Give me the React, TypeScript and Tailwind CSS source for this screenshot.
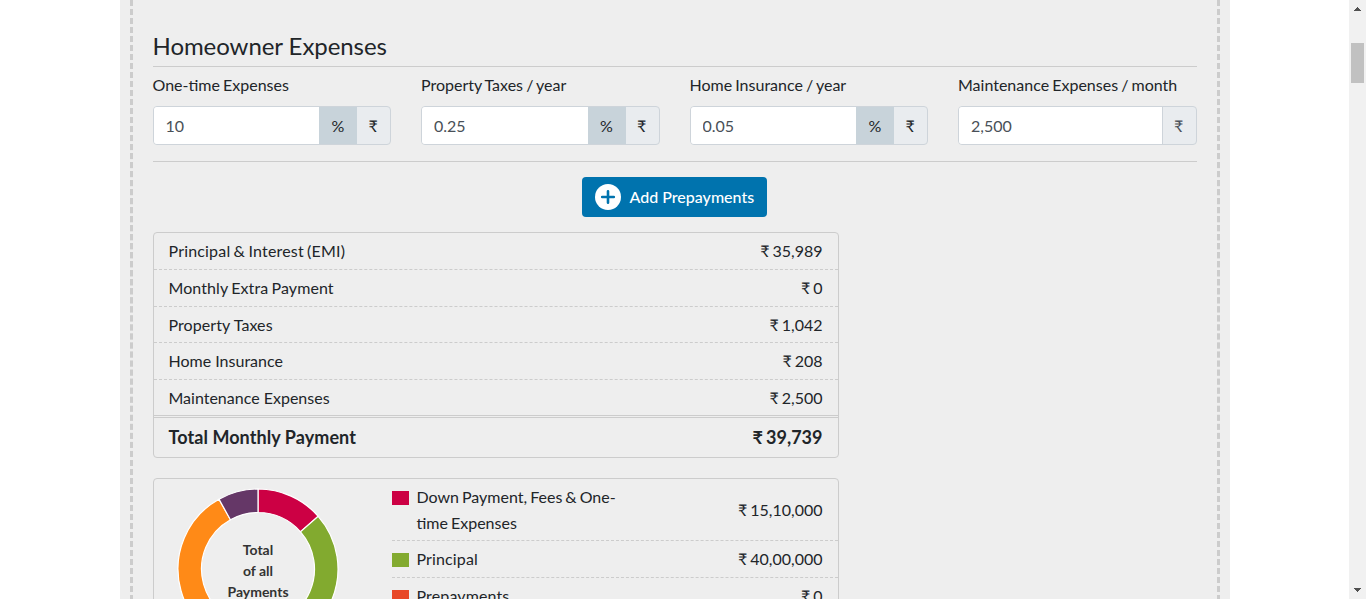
import React from "react";

type Field = { label: string; value: string; percent: boolean };

const fields: Field[] = [
  { label: "One-time Expenses", value: "10", percent: true },
  { label: "Property Taxes / year", value: "0.25", percent: true },
  { label: "Home Insurance / year", value: "0.05", percent: true },
  { label: "Maintenance Expenses / month", value: "2,500", percent: false },
];

const monthly = [
  { label: "Principal & Interest (EMI)", value: "35,989", height: "h-[37px]", tracking: "tracking-[0.18px] [word-spacing:-1px]" },
  { label: "Monthly Extra Payment", value: "0", height: "h-[37px]", tracking: "tracking-[0.08px] [word-spacing:-0.8px]" },
  { label: "Property Taxes", value: "1,042", height: "h-[36px]", tracking: "tracking-[0.08px]" },
  { label: "Home Insurance", value: "208", height: "h-[37px]", tracking: "tracking-normal" },
];

const legend = [
  { label: "Down Payment, Fees & One-time Expenses", value: "15,10,000", color: "bg-[#cc0044]", height: "h-[62px]", tracking: "[word-spacing:-1.1px]" },
  { label: "Principal", value: "40,00,000", color: "bg-[#82aa2f]", height: "h-[37px]", tracking: "tracking-[0.13px]" },
  { label: "Prepayments", value: "0", color: "bg-[#e84827]", height: "h-[37px]", tracking: "tracking-[0.13px]" },
];

function DashedRail() {
  return (
    <div className="w-[3px] shrink-0 bg-[repeating-linear-gradient(to_bottom,#ccc_0px,#ccc_5.7px,#eee_6.3px,#eee_8.7px,#ccc_9.016px)]" />
  );
}

function Amount({ value }: { value: string }) {
  return <span className="[word-spacing:-1.1px]">₹ {value}</span>;
}

function ExpenseField({ label, value, percent }: Field) {
  return (
    <div className="min-w-0">
      <label className="block h-[26px] leading-[26px] [word-spacing:-1px] whitespace-nowrap">{label}</label>
      <div className="mt-[8px] flex h-[39px] overflow-hidden rounded border border-[#ced4da] bg-[#e9ecef]">
        <input
          className="min-w-0 flex-1 bg-white px-3 text-[#495057] outline-none"
          defaultValue={value}
        />
        {percent && (
          <span className="-my-px flex w-[38px] items-center justify-center bg-[#c8d3da] pt-px text-[#212529]">%</span>
        )}
        <span
          className={
            percent
              ? "flex w-[33px] items-center justify-center pr-px text-[#212529]"
              : "flex w-[34px] items-center justify-center border-l border-[#ced4da] pr-px text-[#495057]"
          }
        >
          ₹
        </span>
      </div>
    </div>
  );
}

function arc(start: number, end: number) {
  const point = (r: number, deg: number) => {
    const a = (deg * Math.PI) / 180;
    return `${80 + r * Math.sin(a)} ${80 - r * Math.cos(a)}`;
  };
  const large = end - start > 180 ? 1 : 0;
  return `M${point(80, start)}A80 80 0 ${large} 1 ${point(80, end)}L${point(56.5, end)}A56.5 56.5 0 ${large} 0 ${point(56.5, start)}Z`;
}

function Donut() {
  return (
    <div className="mt-[10px] ml-[24px] grid h-[160px] w-[161px] shrink-0 place-items-center">
      <svg className="col-start-1 row-start-1 overflow-visible justify-self-start" width="160" height="160" viewBox="0 0 160 160" stroke="#fff" strokeWidth="1.2">
        <path d={arc(0, 48.8)} fill="#cc0044" />
        <path d={arc(48.8, 178)} fill="#82aa2f" />
        <path d={arc(178, 330.8)} fill="#ff8a17" />
        <path d={arc(330.8, 360)} fill="#653767" />
      </svg>
      <div className="col-start-1 row-start-1 pt-[2px] text-center text-[14px] leading-[21px] font-bold text-[#333]">
        Total<br />of all<br />Payments
      </div>
    </div>
  );
}

export default function App() {
  return (
    <div className="flex h-[599px] w-[1366px] overflow-hidden bg-white font-['Lato',sans-serif] text-[16px] text-[#212529]">
      <main className="ml-[120px] flex w-[1110px] shrink-0 bg-[#eee] px-[10px]">
        <DashedRail />
        <div className="min-w-0 flex-1 pt-[30px] pr-[20.5px] pl-[19.5px]">
          <h2 className="h-[37px] border-b border-[#ccc] text-[24px] leading-[32px] tracking-[-0.06px]">Homeowner Expenses</h2>
          <section className="grid grid-cols-4 gap-[30px] pt-[5px]">
            {fields.map((f) => (
              <ExpenseField key={f.label} {...f} />
            ))}
          </section>
          <div className="mt-4 flex justify-center border-t border-[#ccc] pt-[15px]">
            <button className="mr-px flex h-10 w-[185px] items-center gap-[9px] rounded bg-[#0073ae] pl-[13px] whitespace-nowrap text-white">
              <svg width="26" height="26" viewBox="0 0 26 26">
                <circle cx="13" cy="13" r="13" fill="#fff" />
                <path d="M13 7.2v11.6M7.2 13h11.6" stroke="#0073ae" strokeWidth="2.6" strokeLinecap="round" />
              </svg>
              <span className="font-medium">Add Prepayments</span>
            </button>
          </div>

          <section className="mt-[15px] h-[226px] w-[686px] rounded border border-[#ccc]">
            {monthly.map((r) => (
              <div key={r.label} className={`${r.height} flex items-center justify-between border-b border-dashed border-[#ccc] px-[15px]`}>
                <span className={r.tracking}>{r.label}</span>
                <Amount value={r.value} />
              </div>
            ))}
            <div className="flex h-[38px] items-center justify-between border-b-[3px] border-double border-[#ccc] px-[15px]">
              <span>Maintenance Expenses</span>
              <Amount value="2,500" />
            </div>
            <div className="flex h-[39px] items-center justify-between px-[15px] text-[18px] font-bold">
              <span className="tracking-[0.07px]">Total Monthly Payment</span>
              <Amount value="39,739" />
            </div>
          </section>

          <section className="mt-[20px] flex h-[260px] w-[686px] items-start rounded border border-[#ccc]">
            <Donut />
            <div className="ml-[53px] flex-1">
              {legend.map((r) => (
                <div key={r.label} className={`${r.height} flex items-center justify-between border-b border-dashed border-[#ccc] pr-[15px]`}>
                  <div className="flex items-start">
                    <span className={`${r.color} mt-[7px] mr-2 h-[14px] w-[17px] shrink-0`} />
                    <span className={`${r.tracking} w-[215px] leading-[26px]`}>{r.label}</span>
                  </div>
                  <Amount value={r.value} />
                </div>
              ))}
            </div>
          </section>
        </div>
        <DashedRail />
      </main>
      <aside className="ml-auto flex w-[17px] shrink-0 flex-col items-center bg-[#f1f1f1]">
        <svg className="mt-[7px] shrink-0" width="7" height="4" viewBox="0 0 7 4" shapeRendering="crispEdges">
          <path d="M3 0h1v1h1v1h1v1h1v1H0V3h1V2h1V1h1z" fill="#505050" />
        </svg>
        <div className="mt-[32px] h-[40px] w-[13px] shrink-0 bg-[#c1c1c1]" />
        <svg className="mt-auto mb-[7px] shrink-0" width="7" height="4" viewBox="0 0 7 4" shapeRendering="crispEdges">
          <path d="M0 0h7v1H6v1H5v1H4v1H3V3H2V2H1V1H0z" fill="#505050" />
        </svg>
      </aside>
    </div>
  );
}
